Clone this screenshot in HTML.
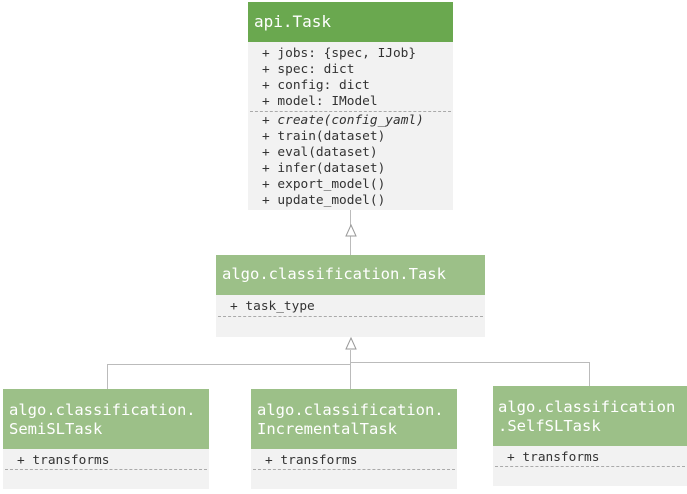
<!DOCTYPE html><html><head><style>
body{margin:0;width:687px;height:494px;background:#fff;position:relative;overflow:hidden;font-family:"DejaVu Sans Mono","Liberation Mono",monospace}
.b{position:absolute;background:#f2f2f2}
.h{position:absolute;left:0;right:0;top:0;color:#fff;font-size:15.5px;line-height:19px;padding:0 0 0 6px;box-sizing:border-box;white-space:nowrap}
.m{position:absolute;left:14px;font-size:12.8px;line-height:16px;color:#333;white-space:pre}
.d{position:absolute;left:2px;right:2px;border-top:1px dashed #aaa}
.l{position:absolute;background:#bbb}
</style></head><body>
<div class="b" style="left:248px;top:2px;width:205px;height:208px">
<div class="h" style="background:#6aa84f;height:40px;padding-top:10px;font-size:16px">api.Task</div>
<div class="m" style="top:44px">+ jobs: {spec, IJob}
+ spec: dict
+ config: dict
+ model: IModel</div>
<div class="d" style="top:109px"></div>
<div class="m" style="top:111px">+ <i>create(config_yaml)</i>
+ train(dataset)
+ eval(dataset)
+ infer(dataset)
+ export_model()
+ update_model()</div>
</div>
<div class="l" style="left:350px;top:210px;width:1px;height:45px"></div>
<svg style="position:absolute;left:344px;top:224px" width="14" height="14"><path d="M7 1 L12 12 L2 12 Z" fill="#fff" stroke="#999"/></svg>

<div class="b" style="left:216px;top:255px;width:269px;height:82px">
<div class="h" style="background:#9cc088;height:40px;padding-top:10px">algo.classification.Task</div>
<div class="m" style="top:44px">+ task_type</div>
<div class="d" style="top:61px"></div>
</div>
<svg style="position:absolute;left:344px;top:337px" width="14" height="14"><path d="M7 1 L12 12 L2 12 Z" fill="#fff" stroke="#999"/></svg>
<div class="l" style="left:350px;top:350px;width:1px;height:39px"></div>
<div class="l" style="left:107px;top:364px;width:244px;height:1px"></div>
<div class="l" style="left:350px;top:362px;width:240px;height:1px"></div>
<div class="l" style="left:107px;top:364px;width:1px;height:25px"></div>
<div class="l" style="left:589px;top:362px;width:1px;height:24px"></div>

<div class="b" style="left:3px;top:389px;width:206px;height:100px">
<div class="h" style="background:#9cc088;height:60px;padding-top:12px">algo.classification.<br>SemiSLTask</div>
<div class="m" style="top:64px">+ transforms</div>
<div class="d" style="top:80px"></div>
</div>
<div class="b" style="left:251px;top:389px;width:206px;height:100px">
<div class="h" style="background:#9cc088;height:60px;padding-top:12px">algo.classification.<br>IncrementalTask</div>
<div class="m" style="top:64px">+ transforms</div>
<div class="d" style="top:80px"></div>
</div>
<div class="b" style="left:493px;top:386px;width:194px;height:100px">
<div class="h" style="background:#9cc088;height:60px;padding-top:12px;padding-left:5px">algo.classification<br>.SelfSLTask</div>
<div class="m" style="top:64px">+ transforms</div>
<div class="d" style="top:80px"></div>
</div>
</body></html>
